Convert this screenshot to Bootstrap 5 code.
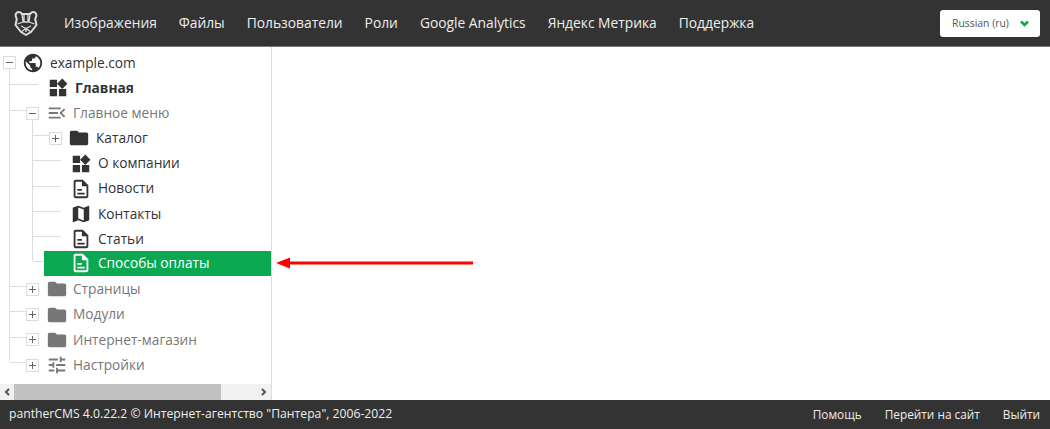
<!DOCTYPE html>
<html lang="ru">

<head>
  <meta charset="UTF-8">
  <title>pantherCMS</title>
  <link href="https://cdn.jsdelivr.net/npm/bootstrap@5.3.3/dist/css/bootstrap.min.css" rel="stylesheet">
  <style>
    html, body { height: 100%; overflow: hidden; }
    body { font-family: "Open Sans", "Liberation Sans", sans-serif; font-size: 13.7px; color: #333; background: #fff; }
    .page-wrap { height: 429px; }
    .top-bar { height: 47px; background: #333; border-bottom: 1px solid #777; padding: 0 10px 0 13px; }
    .top-bar .nav-link { color: #eee; font-size: 13.8px; padding: 0; }
    .top-menu { margin-left: 25px; gap: 22px; padding-top: 1px; }
    .lang-btn { width: 100px; height: 27px; background: #fff; border-radius: 3px; font-size: 10.4px; color: #555; padding: 0 11px 0 12px; }
    .lang-btn span { margin-top: 1px; }
    .side-panel { width: 272px; border-right: 1px solid #ddd; }
    .tree-box { padding-top: 3.2px; }
    .tree-row { height: 25.2px; position: relative; color: #333; white-space: nowrap; }
    .tree-row.muted-row { color: #777; }
    .tree-row.active-row { color: #fff; background: #0aa851; margin: -1px 0 1px 44px; }
    .tree-row svg.ico { width: 22px; height: 22px; fill: currentColor; flex: none; }
    .toggler { width: 13px; height: 13px; border: 1px solid #ddd; background: #fff; flex: none; position: relative; }
    .toggler::before { content: ""; position: absolute; left: 2px; right: 2px; top: 5px; height: 1px; background: #666; }
    .toggler.closed::after { content: ""; position: absolute; top: 2px; bottom: 2px; left: 5px; width: 1px; background: #666; }
    .pl-root { padding-left: 3px; }
    .pl-root .toggler { margin-right: 6px; }
    .pl-root .ico { margin-right: 6px; }
    .pl-one { padding-left: 47px; }
    .pl-one .ico { margin-right: 6px; }
    .pl-fold { padding-left: 26px; }
    .pl-fold .toggler { margin-right: 7px; }
    .pl-fold .ico { margin-right: 5px; }
    .pl-cat { padding-left: 49px; }
    .pl-cat .toggler { margin-right: 6px; }
    .pl-cat .ico { margin-right: 6px; }
    .pl-leaf { padding-left: 70px; }
    .pl-leaf .ico { margin-right: 6px; }
    .active-row.pl-leaf { padding-left: 26px; }
    /* tree connector lines */
    .tree-lines { position: relative; }
    .line-v, .line-h { position: absolute; background: #ddd; }
    .line-v { width: 1px; }
    .line-h { height: 1px; }
    .fake-scroll { height: 16px; background: #f1f1f1; }
    .fake-scroll svg { width: 14px; height: 16px; flex: none; }
    .scroll-thumb { width: 207px; height: 16px; background: #c1c1c1; }
    .bottom-bar { height: 29px; background: #333; color: #eee; font-size: 12.2px; padding: 0 10px 0 9px; }
    .bottom-bar a { color: #eee; text-decoration: none; font-size: 11.8px; }
    .bottom-links { gap: 23px; }
    .red-arrow { position: absolute; left: 275px; top: 257px; width: 200px; height: 12px; }
    .nav-logo { width: 26px; height: 26px; flex: none; }
  </style>
</head>

<body>
  <svg width="0" height="0" class="d-block position-absolute">
    <symbol id="i-public" viewBox="0 0 24 24"><path d="M12 2C6.48 2 2 6.48 2 12s4.48 10 10 10 10-4.48 10-10S17.52 2 12 2zm-1 17.93c-3.95-.49-7-3.85-7-7.93 0-.62.08-1.21.21-1.79L9 15v1c0 1.1.9 2 2 2v1.93zm6.9-2.54c-.26-.81-1-1.39-1.9-1.39h-1v-3c0-.55-.45-1-1-1H8v-2h2c.55 0 1-.45 1-1V7h2c1.1 0 2-.9 2-2v-.41c2.93 1.19 5 4.06 5 7.41 0 2.08-.8 3.97-2.1 5.39z"/></symbol>
    <symbol id="i-widgets" viewBox="0 0 24 24"><path d="M13 13v8h8v-8h-8zM3 21h8v-8H3v8zM3 3v8h8V3H3zm13.66-1.31L11 7.34 16.66 13l5.66-5.66-5.66-5.65z"/></symbol>
    <symbol id="i-menu" viewBox="0 0 24 24"><path d="M3 18h13v-2H3v2zm0-5h10v-2H3v2zm0-7v2h13V6H3zm18 9.59L17.42 12 21 8.41 19.59 7l-5 5 5 5L21 15.59z"/></symbol>
    <symbol id="i-folder" viewBox="0 0 24 24"><path d="M10 4H4c-1.1 0-1.99.9-1.99 2L2 18c0 1.1.9 2 2 2h16c1.1 0 2-.9 2-2V8c0-1.1-.9-2-2-2h-8l-2-2z"/></symbol>
    <symbol id="i-doc" viewBox="0 0 24 24"><path d="M8 16h8v2H8zm0-4h5v2H8zm6-10H6c-1.1 0-2 .9-2 2v16c0 1.1.89 2 1.99 2H18c1.1 0 2-.9 2-2V8l-6-6zm4 18H6V4h7v5h5v11z"/></symbol>
    <symbol id="i-map" viewBox="0 0 24 24"><path d="M20.5 3l-.16.03L15 5.1 9 3 3.36 4.9c-.21.07-.36.25-.36.48V20.5c0 .28.22.5.5.5l.16-.03L9 18.9l6 2.1 5.64-1.9c.21-.07.36-.25.36-.48V3.5c0-.28-.22-.5-.5-.5zM15 19l-6-2.11V5l6 2.11V19z"/></symbol>
    <symbol id="i-tune" viewBox="0 0 24 24"><path d="M3 17v2h6v-2H3zM3 5v2h10V5H3zm10 16v-2h8v-2h-8v-2h-2v6h2zM7 9v2H3v2h4v2h2V9H7zm14 4v-2H11v2h10zm-6-4h2V7h4V5h-4V3h-2v6z"/></symbol>
  </svg>

  <div class="page-wrap d-flex flex-column position-relative">
    <!-- Top menu -->
    <nav class="top-bar d-flex align-items-center">
      <svg class="nav-logo" viewBox="0 0 26 26" fill="none" stroke="#ddd" stroke-width="1.3" stroke-linejoin="round">
        <path stroke-width="2" d="M3 7C1.500 3.500 5 .8 7.500 2.500L9 4h8l1.500-1.500C21 .8 24.500 3.500 23 7l-.8 2 1.300 6L18 22l-5 3-5-3-5.500-7 1.300-6z"/>
        <path d="M9 4l1 8-5.500 2M17 4l-1 8 5.500 2M11 5v7h4V5M8 16l5 2.500 5-2.500M13 18.500V22M8 22l5-3.500 5 3.500"/>
      </svg>
      <ul class="nav top-menu flex-grow-1">
        <li class="nav-item"><a class="nav-link" href="#">Изображения</a></li>
        <li class="nav-item"><a class="nav-link" href="#">Файлы</a></li>
        <li class="nav-item"><a class="nav-link" href="#">Пользователи</a></li>
        <li class="nav-item"><a class="nav-link" href="#">Роли</a></li>
        <li class="nav-item"><a class="nav-link" href="#">Google Analytics</a></li>
        <li class="nav-item"><a class="nav-link" href="#">Яндекс Метрика</a></li>
        <li class="nav-item"><a class="nav-link" href="#">Поддержка</a></li>
      </ul>
      <div class="lang-btn d-flex align-items-center justify-content-between">
        <span>Russian (ru)</span>
        <svg width="9" height="7" viewBox="0 0 9 7" fill="none" stroke="#0aa851" stroke-width="2.6"><path d="M1 1.500l3.500 3.500L8 1.500"/></svg>
      </div>
    </nav>

    <div class="d-flex flex-grow-1" style="min-height:0">
      <!-- Tree -->
      <aside class="side-panel d-flex flex-column">
        <div class="tree-box tree-lines flex-grow-1">
          <span class="line-v" style="left:9px;top:18px;height:297px"></span>
          <span class="line-h" style="left:10px;top:37px;width:28px"></span>
          <span class="line-h" style="left:10px;top:63px;width:16px"></span>
          <span class="line-h" style="left:10px;top:239px;width:16px"></span>
          <span class="line-h" style="left:10px;top:264px;width:16px"></span>
          <span class="line-h" style="left:10px;top:290px;width:16px"></span>
          <span class="line-h" style="left:10px;top:315px;width:16px"></span>
          <span class="line-v" style="left:32px;top:69px;height:145px"></span>
          <span class="line-h" style="left:33px;top:88px;width:16px"></span>
          <span class="line-h" style="left:33px;top:113px;width:28px"></span>
          <span class="line-h" style="left:33px;top:139px;width:28px"></span>
          <span class="line-h" style="left:33px;top:164px;width:28px"></span>
          <span class="line-h" style="left:33px;top:189px;width:28px"></span>
          <span class="line-h" style="left:33px;top:214px;width:11px"></span>

          <div class="tree-row d-flex align-items-center pl-root"><span class="toggler"></span><svg class="ico"><use href="#i-public"/></svg>example.com</div>
          <div class="tree-row d-flex align-items-center pl-one fw-bold"><svg class="ico"><use href="#i-widgets"/></svg>Главная</div>
          <div class="tree-row muted-row d-flex align-items-center pl-fold"><span class="toggler"></span><svg class="ico"><use href="#i-menu"/></svg>Главное меню</div>
          <div class="tree-row d-flex align-items-center pl-cat"><span class="toggler closed"></span><svg class="ico"><use href="#i-folder"/></svg>Каталог</div>
          <div class="tree-row d-flex align-items-center pl-leaf"><svg class="ico"><use href="#i-widgets"/></svg>О компании</div>
          <div class="tree-row d-flex align-items-center pl-leaf"><svg class="ico"><use href="#i-doc"/></svg>Новости</div>
          <div class="tree-row d-flex align-items-center pl-leaf"><svg class="ico"><use href="#i-map"/></svg>Контакты</div>
          <div class="tree-row d-flex align-items-center pl-leaf"><svg class="ico"><use href="#i-doc"/></svg>Статьи</div>
          <div class="tree-row active-row d-flex align-items-center pl-leaf"><svg class="ico"><use href="#i-doc"/></svg>Способы оплаты</div>
          <div class="tree-row muted-row d-flex align-items-center pl-fold"><span class="toggler closed"></span><svg class="ico"><use href="#i-folder"/></svg>Страницы</div>
          <div class="tree-row muted-row d-flex align-items-center pl-fold"><span class="toggler closed"></span><svg class="ico"><use href="#i-folder"/></svg>Модули</div>
          <div class="tree-row muted-row d-flex align-items-center pl-fold"><span class="toggler closed"></span><svg class="ico"><use href="#i-folder"/></svg>Интернет-магазин</div>
          <div class="tree-row muted-row d-flex align-items-center pl-fold"><span class="toggler closed"></span><svg class="ico"><use href="#i-tune"/></svg>Настройки</div>
        </div>
        <div class="fake-scroll d-flex align-items-center">
          <svg viewBox="0 0 14 16" fill="none" stroke="#555" stroke-width="2"><path d="M9 5l-3 3 3 3"/></svg>
          <div class="scroll-thumb"></div>
          <div class="flex-grow-1"></div>
          <svg viewBox="0 0 14 16" fill="none" stroke="#555" stroke-width="2"><path d="M5 5l3 3-3 3"/></svg>
        </div>
      </aside>
      <main class="flex-grow-1"></main>
    </div>

    <!-- Footer -->
    <footer class="bottom-bar d-flex align-items-center justify-content-between">
      <span>pantherCMS 4.0.22.2 © Интернет-агентство "Пантера", 2006-2022</span>
      <div class="bottom-links d-flex">
        <a href="#">Помощь</a>
        <a href="#">Перейти на сайт</a>
        <a href="#">Выйти</a>
      </div>
    </footer>

    <!-- annotation arrow over the screenshot -->
    <svg class="red-arrow" viewBox="0 0 200 12"><path d="M1 6l14-5.500v4h183v3H15v4z" fill="#f00"/></svg>
  </div>

  <script src="https://cdn.jsdelivr.net/npm/bootstrap@5.3.3/dist/js/bootstrap.bundle.min.js"></script>
</body>

</html>
